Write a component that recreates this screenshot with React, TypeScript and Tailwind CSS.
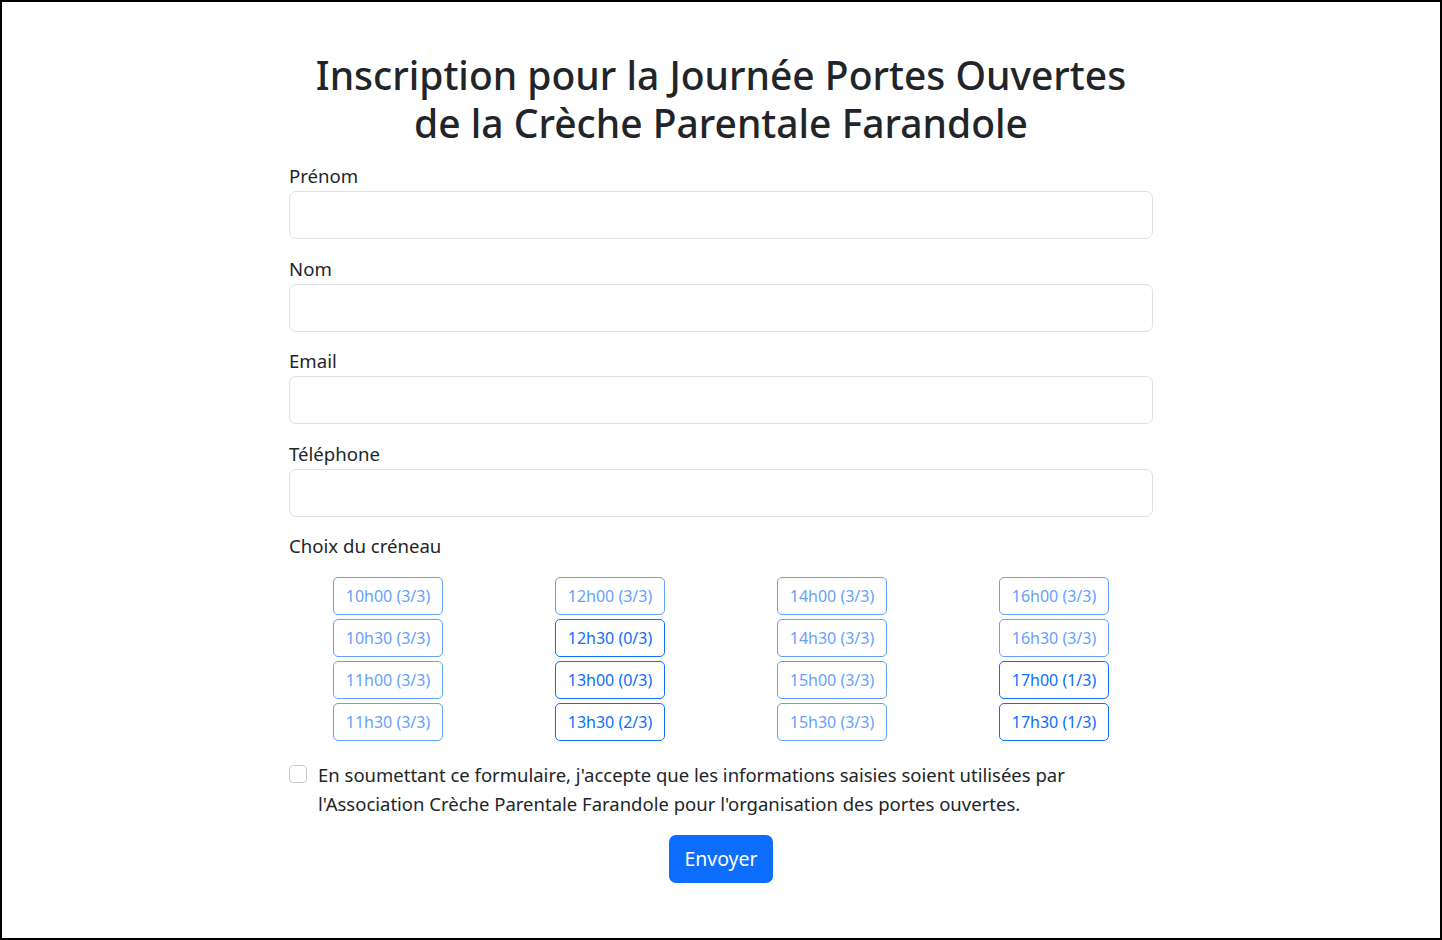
import { useState } from "react";

const slots = [
  [
    { time: "10h00", taken: 3 },
    { time: "10h30", taken: 3 },
    { time: "11h00", taken: 3 },
    { time: "11h30", taken: 3 },
  ],
  [
    { time: "12h00", taken: 3 },
    { time: "12h30", taken: 0 },
    { time: "13h00", taken: 0 },
    { time: "13h30", taken: 2 },
  ],
  [
    { time: "14h00", taken: 3 },
    { time: "14h30", taken: 3 },
    { time: "15h00", taken: 3 },
    { time: "15h30", taken: 3 },
  ],
  [
    { time: "16h00", taken: 3 },
    { time: "16h30", taken: 3 },
    { time: "17h00", taken: 1 },
    { time: "17h30", taken: 1 },
  ],
];

const fields = ["Prénom", "Nom", "Email", "Téléphone"];

export default function App() {
  const [selected, setSelected] = useState<string | null>(null);
  const [agree, setAgree] = useState(false);

  return (
    <div className="min-h-screen bg-white border-2 border-black text-[#212529] font-['Noto_Sans',sans-serif]">
      <div className="w-[864px] mx-auto pt-[49px]">
        <h1 className="text-[39px] leading-[48px] font-medium text-center mb-[15px]">
          Inscription pour la Journée Portes Ouvertes
          <br />
          de la Crèche Parentale Farandole
        </h1>

        {fields.map((label) => (
          <div key={label} className="mb-[15.5px]">
            <label className="block text-[18.6px] leading-[27px] mb-[2px]">
              {label}
            </label>
            <input
              type="text"
              className="block w-full h-[48px] px-4 text-[20px] border border-[#dee2e6] rounded-[7px] outline-none focus:border-[#86b7fe]"
            />
          </div>
        ))}

        <label className="block text-[18.6px] leading-[27px] mt-[1.5px] mb-[2px]">
          Choix du créneau
        </label>

        <div className="grid grid-cols-4 -mx-3 mt-[17.5px]">
          {slots.map((col, i) => (
            <div key={i} className="flex flex-col items-center gap-1">
              {col.map((s) => {
                const full = s.taken >= 3;
                const active = selected === s.time;
                return (
                  <button
                    key={s.time}
                    type="button"
                    disabled={full}
                    onClick={() => setSelected(s.time)}
                    className={`w-[110px] h-[38px] border border-[#0d6efd] rounded-[5px] text-[16px] ${
                      full
                        ? "text-[#0d6efd] opacity-65"
                        : active
                        ? "bg-[#0d6efd] text-white"
                        : "text-[#0d6efd] hover:bg-[#0d6efd] hover:text-white"
                    }`}
                  >
                    {s.time} ({s.taken}/3)
                  </button>
                );
              })}
            </div>
          ))}
        </div>

        <div className="flex items-start mt-[19.5px]">
          <input
            type="checkbox"
            checked={agree}
            onChange={(e) => setAgree(e.target.checked)}
            className="appearance-none w-[18px] h-[18px] mt-[5px] mr-[11px] border border-[#c6cbd0] rounded-[4px] checked:bg-[#0d6efd] checked:border-[#0d6efd] shrink-0"
          />
          <p className="text-[18.5px] leading-[29px]">
            En soumettant ce formulaire, j'accepte que les informations saisies soient utilisées par
            <br />
            l'Association Crèche Parentale Farandole pour l'organisation des portes ouvertes.
          </p>
        </div>

        <div className="flex justify-center mt-[17px]">
          <button
            type="submit"
            className="h-[48px] px-[15px] bg-[#0d6efd] text-white text-[19.5px] rounded-[7px] hover:bg-[#0b5ed7]"
          >
            Envoyer
          </button>
        </div>
      </div>
    </div>
  );
}
